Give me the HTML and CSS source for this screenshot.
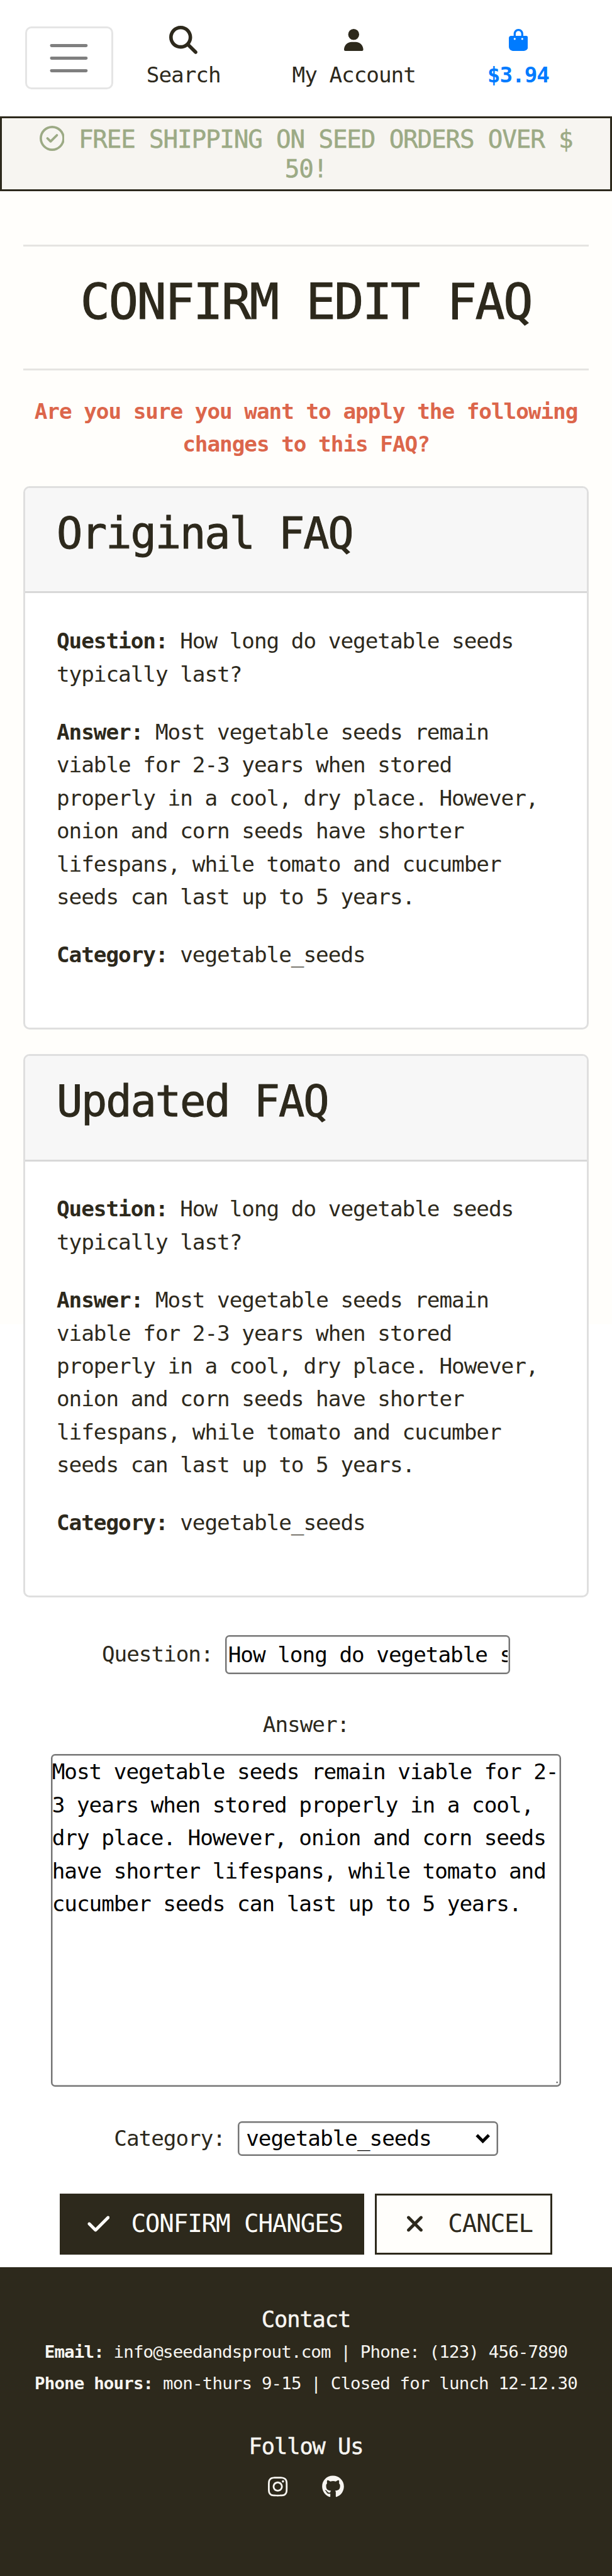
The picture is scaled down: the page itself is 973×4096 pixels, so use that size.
FILE: index.html
```html
<!DOCTYPE html>
<html lang="en">
<head>
<meta charset="utf-8">
<title>Confirm Edit FAQ</title>
<link rel="stylesheet" href="styles.css">
</head>
<body>
<header class="topbar">
  <button class="toggler" aria-label="Toggle navigation">
    <svg viewBox="0 0 30 30"><path stroke="rgba(0,0,0,.5)" stroke-width="2" stroke-linecap="round" stroke-miterlimit="10" d="M4 7h22M4 15h22M4 23h22"/></svg>
  </button>
  <nav class="nav">
    <a class="nav-item">
      <span class="nav-icon"><svg class="icon-search" viewBox="0 0 512 512"><path d="M416 208c0 45.9-14.9 88.3-40 122.7L502.6 457.4c12.5 12.5 12.5 32.8 0 45.3s-32.8 12.5-45.3 0L330.7 376c-34.4 25.2-76.8 40-122.7 40C93.1 416 0 322.9 0 208S93.1 0 208 0S416 93.1 416 208zM208 352a144 144 0 1 0 0-288 144 144 0 1 0 0 288z"/></svg></span>
      <span>Search</span>
    </a>
    <a class="nav-item">
      <span class="nav-icon"><svg class="icon-small" viewBox="0 0 448 512"><path d="M224 256A128 128 0 1 0 224 0a128 128 0 1 0 0 256zm-45.7 48C79.8 304 0 383.8 0 482.3C0 498.7 13.3 512 29.7 512H418.3c16.4 0 29.7-13.3 29.7-29.7C448 383.8 368.2 304 269.7 304H178.3z"/></svg></span>
      <span>My Account</span>
    </a>
    <a class="nav-item bag">
      <span class="nav-icon"><svg class="icon-small" viewBox="0 0 448 512"><path d="M160 112c0-35.3 28.7-64 64-64s64 28.7 64 64v48H160V112zm-48 48H48c-26.5 0-48 21.5-48 48V416c0 53 43 96 96 96H352c53 0 96-43 96-96V208c0-26.5-21.5-48-48-48H336V112C336 50.1 285.9 0 224 0S112 50.1 112 112v48zm24 48a24 24 0 1 1 0 48 24 24 0 1 1 0-48zm152 24a24 24 0 1 1 48 0 24 24 0 1 1 -48 0z"/></svg></span>
      <span>$3.94</span>
    </a>
  </nav>
</header>
<div class="banner">
  <svg class="banner-icon" viewBox="0 0 512 512"><path d="M256 48a208 208 0 1 1 0 416 208 208 0 1 1 0-416zm0 464A256 256 0 1 0 256 0a256 256 0 1 0 0 512zM369 209c9.4-9.4 9.4-24.6 0-33.9s-24.6-9.4-33.9 0l-111 111-47-47c-9.4-9.4-24.6-9.4-33.9 0s-9.4 24.6 0 33.9l64 64c9.4 9.4 24.6 9.4 33.9 0L369 209z"/></svg>
  FREE SHIPPING ON SEED ORDERS OVER $<br>50!
</div>
<main class="page">
  <hr class="rule">
  <h1 class="title">CONFIRM EDIT FAQ</h1>
  <hr class="rule">
  <p class="warning">Are you sure you want to apply the following<br>changes to this FAQ?</p>

  <section class="card">
    <h2 class="card-header">Original FAQ</h2>
    <div class="card-body">
      <p><strong>Question:</strong> How long do vegetable seeds<br>typically last?</p>
      <p><strong>Answer:</strong> Most vegetable seeds remain<br>viable for 2-3 years when stored<br>properly in a cool, dry place. However,<br>onion and corn seeds have shorter<br>lifespans, while tomato and cucumber<br>seeds can last up to 5 years.</p>
      <p><strong>Category:</strong> vegetable_seeds</p>
    </div>
  </section>

  <section class="card">
    <h2 class="card-header">Updated FAQ</h2>
    <div class="card-body">
      <p><strong>Question:</strong> How long do vegetable seeds<br>typically last?</p>
      <p><strong>Answer:</strong> Most vegetable seeds remain<br>viable for 2-3 years when stored<br>properly in a cool, dry place. However,<br>onion and corn seeds have shorter<br>lifespans, while tomato and cucumber<br>seeds can last up to 5 years.</p>
      <p><strong>Category:</strong> vegetable_seeds</p>
    </div>
  </section>

  <form class="form">
    <div class="row question-row">
      <label for="q">Question:</label>
      <input id="q" class="field question" type="text" value="How long do vegetable seeds typically last?">
    </div>
    <label class="answer-label" for="a">Answer:</label>
    <div class="answer-box">
      <textarea id="a" class="field answer">Most vegetable seeds remain viable for 2-
3 years when stored properly in a cool,
dry place. However, onion and corn seeds
have shorter lifespans, while tomato and
cucumber seeds can last up to 5 years.</textarea>
      <svg class="grip" viewBox="0 0 8 8"><path d="M0 2.500l2-2 2 2-2 2z" fill="#666"/><path d="M4 7l3-3" stroke="#bbb" stroke-width="1" fill="none"/></svg>
    </div>
    <div class="row category-row">
      <label>Category:</label>
      <div class="field select">
        <span>vegetable_seeds</span>
        <svg class="chevron" viewBox="0 0 28 18"><path d="M2.500 2.500L14 14 25.500 2.500" fill="none" stroke="#000" stroke-width="6"/></svg>
      </div>
    </div>
    <div class="actions">
      <button type="button" class="btn btn-dark"><svg class="icon-check" viewBox="0 0 448 512"><path d="M438.6 105.400c12.500 12.500 12.500 32.800 0 45.300l-256 256c-12.500 12.500-32.800 12.500-45.300 0l-128-128c-12.500-12.500-12.500-32.800 0-45.300s32.800-12.500 45.300 0L160 338.700 393.400 105.400c12.500-12.500 32.800-12.500 45.300 0z"/></svg><span>CONFIRM CHANGES</span></button>
      <button type="button" class="btn btn-light"><svg class="icon-x" viewBox="0 0 320 512"><path d="M310.600 150.600c12.500-12.500 12.500-32.800 0-45.300s-32.800-12.500-45.300 0L160 210.700 54.600 105.400c-12.500-12.500-32.800-12.500-45.300 0s-12.500 32.800 0 45.300L114.700 256 9.400 361.400c-12.500 12.500-12.500 32.800 0 45.300s32.800 12.500 45.300 0L160 301.300 265.400 406.600c12.500 12.500 32.800 12.500 45.300 0s12.500-32.800 0-45.300L205.300 256 310.600 150.600z"/></svg><span>CANCEL</span></button>
    </div>
  </form>
</main>
<footer class="footer">
  <h5 class="footer-title">Contact</h5>
  <p class="footer-text"><strong>Email:</strong> info@seedandsprout.com | Phone: (123) 456-7890</p>
  <p class="footer-text"><strong>Phone hours:</strong> mon-thurs 9-15 | Closed for lunch 12-12.30</p>
  <h5 class="footer-title follow">Follow Us</h5>
  <div class="social">
    <svg class="icon-insta" viewBox="0 0 448 512"><path d="M224.1 141c-63.6 0-114.900 51.300-114.900 114.900s51.300 114.900 114.900 114.900S339 319.500 339 255.900 287.700 141 224.100 141zm0 189.600c-41.100 0-74.700-33.500-74.700-74.700s33.500-74.700 74.700-74.700 74.700 33.500 74.700 74.700-33.600 74.700-74.700 74.700zm146.400-194.300c0 14.900-12 26.800-26.800 26.800-14.900 0-26.800-12-26.800-26.800s12-26.800 26.800-26.800 26.800 12 26.800 26.800zm76.100 27.200c-1.700-35.900-9.900-67.700-36.200-93.900-26.200-26.200-58-34.400-93.900-36.200-37-2.100-147.900-2.100-184.900 0-35.800 1.700-67.600 9.900-93.900 36.100s-34.400 58-36.200 93.900c-2.100 37-2.100 147.900 0 184.900 1.700 35.900 9.900 67.700 36.200 93.900s58 34.400 93.900 36.200c37 2.100 147.900 2.100 184.900 0 35.900-1.700 67.700-9.900 93.900-36.200 26.200-26.200 34.400-58 36.200-93.900 2.100-37 2.100-147.800 0-184.800zM398.800 388c-7.800 19.600-22.900 34.700-42.600 42.600-29.500 11.700-99.500 9-132.100 9s-102.700 2.600-132.100-9c-19.600-7.800-34.700-22.900-42.600-42.600-11.700-29.500-9-99.500-9-132.100s-2.600-102.700 9-132.100c7.800-19.600 22.900-34.700 42.600-42.600 29.500-11.700 99.500-9 132.100-9s102.700-2.600 132.100 9c19.600 7.800 34.700 22.900 42.600 42.600 11.700 29.500 9 99.500 9 132.100s2.700 102.700-9 132.100z"/></svg>
    <svg class="icon-github" viewBox="0 0 496 512"><path d="M165.900 397.400c0 2-2.300 3.600-5.200 3.600-3.300.3-5.600-1.300-5.600-3.600 0-2 2.300-3.600 5.200-3.600 3-.3 5.600 1.300 5.600 3.600zm-31.100-4.500c-.7 2 1.300 4.300 4.300 4.900 2.600 1 5.600 0 6.200-2s-1.300-4.300-4.300-5.200c-2.600-.7-5.500.3-6.200 2.300zm44.200-1.700c-2.900.7-4.900 2.600-4.600 4.900.3 2 2.900 3.300 5.900 2.600 2.900-.7 4.900-2.600 4.600-4.600-.3-1.900-3-3.200-5.900-2.900zM244.800 8C106.100 8 0 113.300 0 252c0 110.900 69.800 205.800 169.500 239.200 12.800 2.300 17.300-5.600 17.300-12.100 0-6.200-.3-40.400-.3-61.400 0 0-70 15-84.700-29.800 0 0-11.400-29.100-27.800-36.600 0 0-22.900-15.700 1.600-15.400 0 0 24.900 2 38.600 25.800 21.900 38.600 58.600 27.500 72.900 20.900 2.300-16 8.800-27.100 16-33.700-55.900-6.200-112.300-14.300-112.300-110.500 0-27.500 7.600-41.300 23.600-58.900-2.600-6.500-11.100-33.300 2.600-67.900 20.900-6.500 69 27 69 27 20-5.600 41.500-8.500 62.800-8.500s42.800 2.900 62.800 8.500c0 0 48.100-33.600 69-27 13.700 34.700 5.200 61.400 2.600 67.900 16 17.700 25.800 31.500 25.800 58.900 0 96.500-58.900 104.200-114.800 110.500 9.200 7.900 17 22.900 17 46.400 0 33.700-.3 75.400-.3 83.600 0 6.500 4.600 14.400 17.300 12.100C428.200 457.800 496 362.900 496 252 496 113.300 383.500 8 244.800 8z"/></svg>
  </div>
</footer>
</body>
</html>
```
FILE: styles.css
```css
* { box-sizing: border-box; letter-spacing: -0.0302em; }

html {
  font-size: 8.3162px;
  background: #fff;
}

body {
  margin: 0;
  color: #2d291c;
  font-family: "DejaVu Sans Mono", "Liberation Mono", monospace;
  font-size: 4.13rem;
  line-height: 6.3rem;
  background: linear-gradient(#fffefb, #fffefb) no-repeat 0 0 / 100% 253.2rem;
}

h1, h2, h5, p { margin: 0; font-weight: 400; }
h1, h2, h5, .banner { -webkit-text-stroke: .014em currentColor; }
svg { display: block; fill: currentColor; flex: none; }
input, textarea, button { font: inherit; margin: 0; }

.topbar {
  display: flex;
  height: 22.2rem;
  padding-left: 4.8rem;
  background: #fff;
}
.toggler {
  width: 16.8rem;
  height: 12rem;
  margin-top: 5.1rem;
  padding: 0;
  display: flex;
  align-items: center;
  justify-content: center;
  background: none;
  border: 3px solid rgba(0, 0, 0, .1);
  border-radius: 1.2rem;
}
.toggler svg { width: 9rem; height: 9rem; }
.nav { display: flex; gap: 13.7rem; margin-left: 6.4rem; padding-top: 4.9rem; }
.nav-item { display: flex; flex-direction: column; align-items: center; gap: .85rem; }
.nav-icon { display: flex; align-items: center; height: 5.4rem; }
.icon-search { width: 5.4rem; height: 5.4rem; }
.icon-small { width: 3.68rem; height: 4.2rem; }
.icon-insta { width: 3.75rem; height: 4.3rem; }
.bag { color: #007bff; font-weight: 700; }

.banner {
  height: 14.4rem;
  padding-top: 1.25rem;
  border: 3px solid #2d291c;
  background: #f7f5f1;
  color: #9caa85;
  font-size: 4.72rem;
  line-height: 5.67rem;
  text-align: center;
}
.banner-icon { display: inline-block; width: 4.8rem; height: 4.8rem; vertical-align: -.6rem; }

.page { padding: 10.2rem 4.5rem 0; }
.rule { height: .3rem; margin: 0; border: 0; background: #e5e4e1; }
.title {
  height: 23.4rem;
  padding-top: 4.8rem;
  font-size: 9.43rem;
  line-height: 11.5rem;
  text-align: center;
}
.warning {
  margin: 4.7rem 0 4.9rem;
  color: #dc664b;
  font-weight: 700;
  text-align: center;
}

.card {
  height: 103.8rem;
  margin-bottom: 4.8rem;
  border: 3px solid #dfdfdf;
  border-radius: 1.2rem;
  background: #fff;
  overflow: hidden;
}
.card-header {
  height: 20.1rem;
  padding: 3.65rem 5.95rem 0;
  border-bottom: 3px solid #d8d8d8;
  background: #f7f7f7;
  font-size: 8.25rem;
  line-height: 10.08rem;
}
.card-body { padding: 6rem 5.95rem 0; white-space: nowrap; }
.card-body p + p { margin-top: 4.8rem; }

.form { margin-top: 7.2rem; }
.row { display: flex; align-items: center; justify-content: center; gap: 2.36rem; }
.field {
  border: 2.5px solid #767676;
  border-radius: .8rem;
  background: #fff;
  color: #000;
  box-shadow: inset 0 0 0 .5px #767676;
}
.question { width: 54.45rem; height: 7.46rem; padding: 0 .3rem; }
.answer-label { display: block; margin: 6.56rem 0 2.52rem; text-align: center; }
.answer-box { position: relative; width: 97.6rem; margin: 0 auto; }
.answer {
  display: block;
  width: 100%;
  height: 63.53rem;
  padding: 0;
  resize: none;
  overflow: hidden;
  white-space: pre;
}
.grip { position: absolute; right: .2rem; bottom: .3rem; width: .8rem; height: .8rem; }
.category-row { margin-top: 6.63rem; }
.select {
  width: 49.8rem;
  height: 6.57rem;
  padding: 0 1.2rem 0 1.4rem;
  display: flex;
  align-items: center;
  justify-content: space-between;
}
.chevron { width: 2.8rem; height: 1.8rem; }

.actions { display: flex; justify-content: center; gap: 2.1rem; margin-top: 7.23rem; }
.btn {
  display: flex;
  align-items: center;
  height: 11.7rem;
  border: 3px solid #2d291c;
  font-size: 4.72rem;
}
.btn-dark { width: 58.2rem; padding: 0 0 0 4.9rem; gap: 4.1rem; background: #2d291c; color: #fffefb; }
.btn-light { width: 33.9rem; padding: 0 0 0 5.8rem; gap: 4.8rem; background: #fffefb; color: #2d291c; }
.icon-check { width: 4.3rem; height: 4.8rem; }
.icon-x { width: 3rem; height: 4.8rem; }

.footer {
  height: 59.1rem;
  margin-top: 2.4rem;
  padding-top: 7.3rem;
  background: #2d291c;
  color: #f7f5f1;
  text-align: center;
}
.footer-title { font-size: 4.25rem; line-height: 5.2rem; margin-bottom: .76rem; }
.footer-text { font-size: 3.3rem; line-height: 6rem; }
.follow { margin: 6.36rem 0 2.98rem; }
.social { display: flex; justify-content: center; gap: 6.5rem; }
.icon-github { width: 4.2rem; height: 4.3rem; }
```
